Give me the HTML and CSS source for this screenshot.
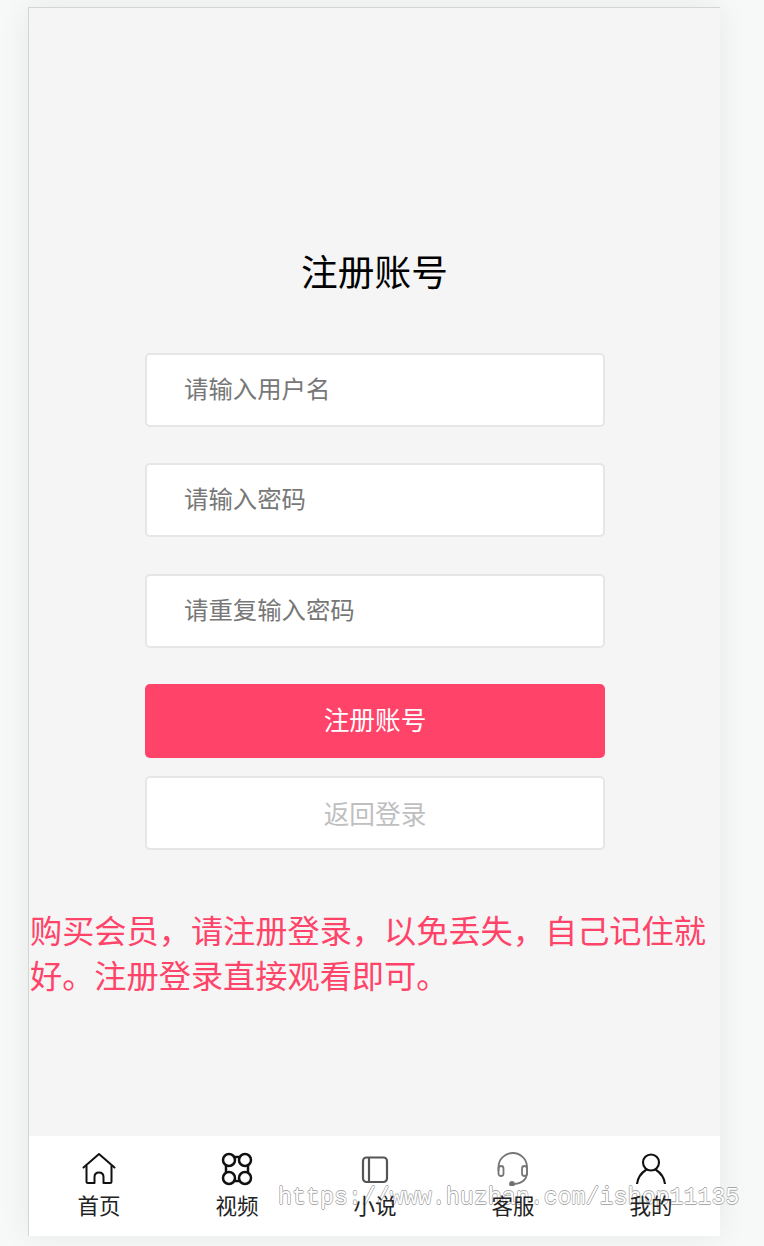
FILE: index.html
```html
<!DOCTYPE html>
<html>
  <head>
    <meta charset="utf-8">
    <title>注册账号</title>
    <link rel="stylesheet" href="styles.css">
  </head>
  <body>
    <div class="frame">
      <h1 class="title">注册账号</h1>
      <form class="form">
        <input class="field" type="text" placeholder="请输入用户名">
        <input class="field" type="password" placeholder="请输入密码">
        <input class="field" type="password" placeholder="请重复输入密码">
        <div class="btn btn-main">注册账号</div>
        <div class="btn btn-back">返回登录</div>
      </form>
      <p class="notice">购买会员，请注册登录，以免丢失，自己记住就好。注册登录直接观看即可。</p>
      <div class="nav">
        <div class="nav-item">
          <svg class="icon" viewBox="0 0 34 34" fill="none" stroke="#111" stroke-width="2" stroke-linejoin="round" stroke-linecap="round">
            <path d="M1.500 15.500 17 2 32.500 15.500"/>
            <path d="M4.500 14V29.500q0 1.500 1.500 1.500h6.500V25q0-4.500 4.500-4.500t4.500 4.500v6H28q1.500 0 1.500-1.500V14"/>
          </svg>
          <span class="nav-label">首页</span>
        </div>
        <div class="nav-item">
          <svg class="icon" viewBox="0 0 34 34" fill="none" stroke="#111" stroke-width="2.500">
            <circle cx="9" cy="8" r="6"/>
            <circle cx="25" cy="8" r="6"/>
            <circle cx="9" cy="26" r="6"/>
            <circle cx="25" cy="26" r="6"/>
            <path d="M13 5h8M13 29h8M6 13v8M28 13v8"/>
          </svg>
          <span class="nav-label">视频</span>
        </div>
        <div class="nav-item">
          <svg class="icon" viewBox="0 0 34 34" fill="none" stroke="#555" stroke-width="2.200">
            <rect x="5" y="5.500" width="24" height="24.500" rx="3.500"/>
            <path d="M11 5.500v24.500"/>
          </svg>
          <span class="nav-label">小说</span>
        </div>
        <div class="nav-item">
          <svg class="icon" viewBox="0 0 34 34" fill="none" stroke="#777" stroke-width="1.800">
            <path d="M2.500 19V15a14.250 14 0 0 1 28.500 0v5q0 11-13 12"/>
            <rect x="2.500" y="14" width="5" height="10" rx="2.500"/>
            <rect x="26" y="14" width="5" height="10" rx="2.500"/>
            <circle cx="16" cy="32" r="2" fill="#666"/>
          </svg>
          <span class="nav-label">客服</span>
        </div>
        <div class="nav-item">
          <svg class="icon" viewBox="0 0 34 34" fill="none" stroke="#111" stroke-width="2.100">
            <circle cx="17" cy="10.500" r="8"/>
            <path d="M3 32q1-9 9.500-14.500M31 32q-1-9-9.500-14.500"/>
          </svg>
          <span class="nav-label">我的</span>
        </div>
      </div>
      <div class="watermark">https://www.huzhan.com/ishop11135</div>
    </div>
  </body>
</html>
```

FILE: styles.css
```css
html, body {
  margin: 0;
  padding: 0;
  height: 100%;
  overflow: hidden;
}
body {
  background-color: #f7f9f8;
  font-family: "Noto Sans CJK SC", "Noto Sans", sans-serif;
  padding: 7px 0 0 28px;
  box-sizing: border-box;
}
.frame {
  position: relative;
  width: 692px;
  height: 1229px;
  box-sizing: border-box;
  background-color: #f5f5f5;
  border-top: 1px solid #d4d4d4;
  border-left: 1px solid #d4d4d4;
  box-shadow: 0 0 30px rgba(0, 0, 0, .07);
  display: flex;
  flex-direction: column;
}
.title {
  margin: 236px 0 0;
  font-size: 36.700px;
  font-weight: 400;
  line-height: 52px;
  color: #000;
  text-align: center;
}
.form {
  margin: 57px 0 0 116px;
  width: 460px;
  display: flex;
  flex-direction: column;
}
.field {
  display: block;
  height: 74px;
  margin-bottom: 36.300px;
  padding: 0 0 5px 37px;
  box-sizing: border-box;
  background-color: #fff;
  border: 2px solid #e6e6e6;
  border-radius: 5px;
  outline: none;
  font-family: inherit;
  font-size: 24.400px;
}
.field::placeholder {
  color: #777;
}
.btn {
  height: 74px;
  box-sizing: border-box;
  border-radius: 5px;
  font-size: 25.700px;
  display: flex;
  align-items: center;
  justify-content: center;
}
.btn-main {
  padding-bottom: 4px;
  background-color: #ff4369;
  color: #fff;
}
.btn-back {
  margin-top: 18px;
  background-color: #fff;
  border: 2px solid #e6e6e6;
  color: #bfbfbf;
}
.notice {
  margin: 57px 0 0 1px;
  font-size: 32.200px;
  line-height: 45px;
  color: #ff4369;
}
.nav {
  margin-top: auto;
  height: 100px;
  padding-left: 1px;
  background-color: #fff;
  display: flex;
}
.nav-item {
  flex: 1;
  display: flex;
  flex-direction: column;
  align-items: center;
  padding-top: 16px;
}
.icon {
  display: block;
  width: 34px;
  height: 34px;
}
.nav-label {
  position: relative;
  z-index: 1;
  font-size: 21.500px;
  line-height: 30px;
  margin-top: 4px;
  color: #222;
}
.watermark {
  position: absolute;
  left: 249px;
  top: 1175px;
  font-family: "Liberation Mono", monospace;
  font-size: 23.300px;
  line-height: 30px;
  white-space: nowrap;
  color: #fff;
  text-shadow: .7px 0 0 #a8a8a8, -.7px 0 0 #a8a8a8, 0 .7px 0 #a8a8a8, 0 -.7px 0 #a8a8a8;
}
```
